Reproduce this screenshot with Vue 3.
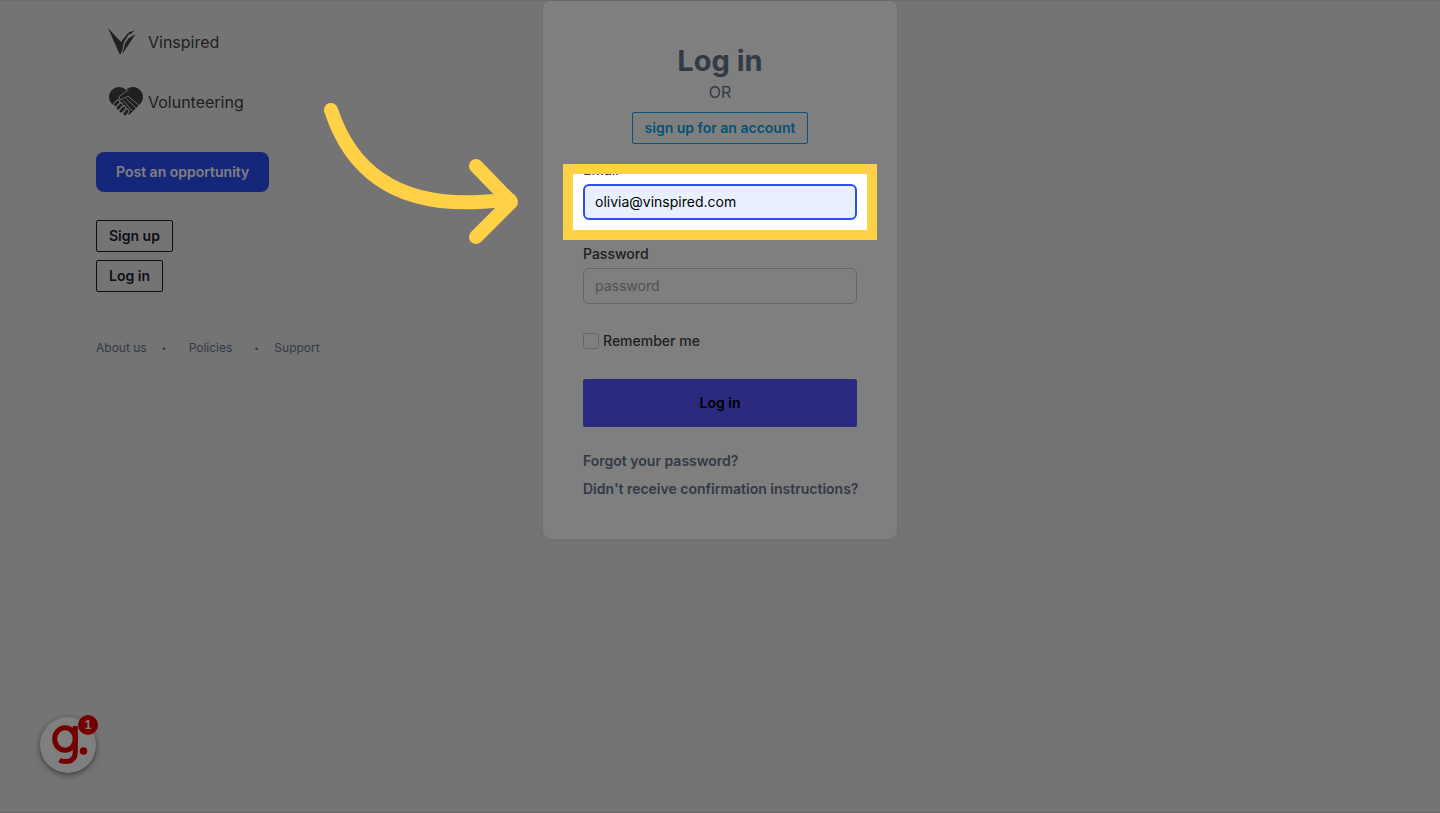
<script setup>
import { ref } from 'vue'

const email = ref('olivia@vinspired.com')
const password = ref('')
const remember = ref(false)
</script>

<template>
  <div class="page">
    <aside class="sidebar">
      <nav class="brand-nav" aria-label="Main">
        <a class="brand" href="#">
          <span class="mark">
            <svg class="bird" width="28" height="28" viewBox="0 0 28 28" aria-hidden="true">
              <path d="M0 0 L13 14 L20 5 L20 7.500 L15.500 15 L14.500 22 L12 27 Z" />
              <path d="M20.500 4.500 L26.500 2.500 L23.500 5.500 L20 7 Z" />
              <path d="M27.500 6 L14.500 26 L17 15.500 L20.500 10.500 Z" />
            </svg>
          </span>
          <span>Vinspired</span>
        </a>
        <a class="brand" href="#">
          <span class="mark">
            <svg class="heart" width="36" height="32" viewBox="0 0 36 32" aria-hidden="true">
              <path d="M18 4 C14 0 8 0 4 4 C0 8 0 14 4 18 L5 19 L10 16 L19 26 L21 29 L32 18 C36 14 36 8 32 4 C28 0 22 0 18 4 Z" />
              <path class="cut" d="M20 4 L11 10.500 Q10.500 14 14 13.500 L20 10 L31 19.500" />
              <path class="cut" d="M18.500 13 L28 22 M15.500 15 L24.500 25" />
              <path class="halo" d="M10 16 L7.500 18.500 M13 19 L10 22 M16 22 L13 25 M19 25 L17 28" />
              <path class="finger" d="M10 16 L7.500 18.500 M13 19 L10 22 M16 22 L13 25 M19 25 L17 28" />
            </svg>
          </span>
          <span>Volunteering</span>
        </a>
      </nav>

      <a class="post" href="#">Post an opportunity</a>

      <div class="account">
        <a class="outline" href="#">Sign up</a>
        <a class="outline" href="#">Log in</a>
      </div>

      <footer class="footer">
        <a href="#">About us</a>
        <span class="dot">•</span>
        <a href="#">Policies</a>
        <span class="dot last">•</span>
        <a href="#">Support</a>
      </footer>
    </aside>

    <main class="card">
      <header class="card-head">
        <h1>Log in</h1>
        <p>OR</p>
        <a class="outline accent" href="#">sign up for an account</a>
      </header>

      <form @submit.prevent>
        <div class="field">
          <label for="email">Email</label>
          <div class="highlighted">
            <input id="email" v-model="email" class="text filled" type="email" />
            <div class="spotlight"></div>
            <svg class="arrow" width="200" height="146" viewBox="0 0 200 146" aria-hidden="true">
              <path d="M11 12 Q43 110 159 104 L190 102 M156 68 L191 104 L156 139" />
            </svg>
          </div>
        </div>
        <div class="field">
          <label for="password">Password</label>
          <input id="password" v-model="password" class="text" type="password" placeholder="password" />
        </div>
        <div class="remember">
          <input id="remember" v-model="remember" type="checkbox" />
          <label for="remember">Remember me</label>
        </div>
        <button class="submit" type="submit">Log in</button>
      </form>

      <div class="help">
        <a href="#">Forgot your password?</a>
        <a href="#">Didn't receive confirmation instructions?</a>
      </div>
    </main>

    <button class="widget" type="button" aria-label="Open guides, 1 new">
      <svg width="56" height="56" viewBox="0 0 56 56" aria-hidden="true">
        <ellipse cx="25" cy="22" rx="10.300" ry="11.300" />
        <path d="M35.300 9 V35 Q35.300 44.600 25.500 44.600 Q22 44.600 19.500 43" />
        <circle class="point" cx="43.500" cy="34" r="3.800" />
      </svg>
      <span class="badge">1</span>
    </button>
  </div>
</template>

<style>
body {
  background: #e9e9e9;
}
</style>

<style scoped>
* {
  box-sizing: border-box;
}

.page {
  position: relative;
  display: grid;
  grid-template-columns: 1fr 354px 1fr;
  align-items: start;
  min-height: 100vh;
  padding: 1px 0;
  overflow: hidden;
  background: #e9e9e9;
  box-shadow: inset 0 1px #d8d8d8, inset 0 -1px #d0d0d0;
  color: #404040;
  font: 500 14px/20px Inter, "Liberation Sans", sans-serif;
}

a {
  color: inherit;
  text-decoration: none;
}

.sidebar {
  display: flex;
  flex-direction: column;
  align-items: flex-start;
  padding: 11px 0 0 96px;
}

.brand-nav {
  display: flex;
  flex-direction: column;
  margin-bottom: 20px;
}

.brand {
  display: flex;
  align-items: center;
  height: 60px;
  font-size: 16px;
  font-weight: 400;
}

.mark {
  display: flex;
  width: 52px;
  padding-left: 12px;
}

.mark svg {
  fill: #404040;
}

.heart path {
  stroke-linecap: round;
  stroke-linejoin: round;
}

.heart .cut {
  fill: none;
  stroke: #d0d0d0;
  stroke-width: 1;
}

.heart .halo {
  fill: none;
  stroke: #e0e0e0;
  stroke-width: 5;
}

.heart .finger {
  fill: none;
  stroke: #404040;
  stroke-width: 3;
}

.post {
  padding: 10px 20px;
  border-radius: 8px;
  background: #2b4ef5;
  color: #fff;
  font-weight: 600;
}

.account {
  display: flex;
  flex-direction: column;
  align-items: flex-start;
  gap: 8px;
  margin: 28px 0 46px;
}

.outline {
  padding: 5px 12px;
  border: 1px solid #1a1a2e;
  border-radius: 2px;
  color: #1a1a2e;
  font-weight: 600;
}

.accent {
  border-color: #00b0f0;
  color: #00a8e8;
}

.footer {
  display: flex;
  align-items: center;
  color: #64748b;
  font-size: 12px;
  font-weight: 400;
}

.dot {
  width: 42px;
  padding-left: 15px;
  font-size: 8px;
}

.dot.last {
  padding-left: 22px;
}

.card {
  padding: 40px;
  border-radius: 8px;
  background: #fff;
  box-shadow: 0 1px 4px rgba(0, 0, 0, 0.08);
}

.card-head {
  display: flex;
  flex-direction: column;
  align-items: center;
  color: #64748b;
}

h1 {
  margin: 0;
  font-size: 29px;
  font-weight: 700;
  line-height: 39px;
}

p {
  margin: 0 0 8px;
  font-size: 16px;
  font-weight: 400;
  line-height: 24px;
}

form {
  display: flex;
  flex-direction: column;
  gap: 24px;
  margin-top: 16px;
}

.field {
  display: flex;
  flex-direction: column;
  gap: 4px;
}

.highlighted {
  position: relative;
}

.text {
  display: block;
  width: 100%;
  height: 36px;
  padding: 0 11px 2px;
  border: 1px solid #c8c8c8;
  border-radius: 6px;
  outline: 0;
  background: #fff;
  color: #000;
  font: inherit;
  font-weight: 400;
}

.text::placeholder {
  color: #a3a3a3;
}

.filled {
  padding: 0 10px 2px;
  border: 2px solid #2b4ef5;
  background: #e8f0fe;
}

.spotlight {
  position: absolute;
  z-index: 2;
  inset: -20px;
  border: 10px solid #ffd147;
  box-shadow: 0 0 0 200vmax rgba(0, 0, 0, 0.5);
  pointer-events: none;
}

.arrow {
  position: absolute;
  z-index: 3;
  top: -86px;
  right: 337px;
  fill: none;
  stroke: #ffd147;
  stroke-width: 14;
  stroke-linecap: round;
  stroke-linejoin: round;
  pointer-events: none;
}

.remember {
  display: flex;
  align-items: center;
  gap: 4px;
  margin: 3px 0 4px;
}

.remember input {
  width: 16px;
  height: 16px;
  margin: 0;
  border: 1px solid #c8c8c8;
  border-radius: 3px;
  background: #fff;
  appearance: none;
}

.remember input:checked {
  background: #2b4ef5;
}

.submit {
  height: 48px;
  border: 0;
  border-radius: 2px;
  background: #5654ff;
  color: #000;
  font: inherit;
  font-weight: 600;
}

.help {
  display: flex;
  flex-direction: column;
  gap: 8px;
  margin-top: 24px;
  color: #64748b;
  font-weight: 600;
  white-space: nowrap;
}

.widget {
  position: absolute;
  bottom: 40px;
  left: 40px;
  width: 56px;
  height: 56px;
  padding: 0;
  border: 0;
  border-radius: 50%;
  background: #fff;
  box-shadow: 0 2px 6px rgba(0, 0, 0, 0.5);
}

.widget svg {
  display: block;
  fill: none;
  stroke: #e60000;
  stroke-width: 5;
}

.widget .point {
  fill: #e60000;
  stroke: none;
}

.badge {
  position: absolute;
  top: -2px;
  right: -2px;
  width: 20px;
  border-radius: 50%;
  background: #e60000;
  color: #fff;
  font-size: 12px;
  font-weight: 800;
  line-height: 20px;
}
</style>
